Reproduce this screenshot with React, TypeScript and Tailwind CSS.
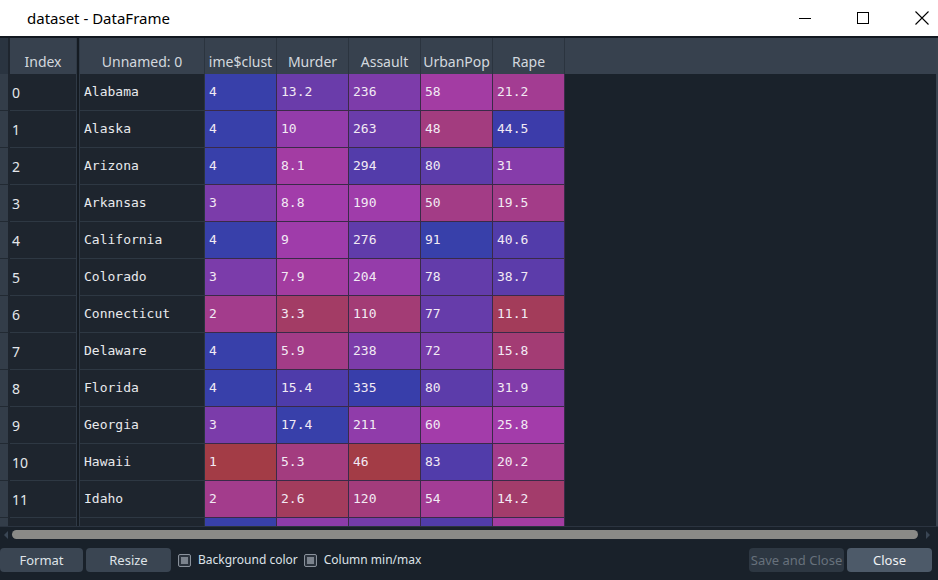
import React from 'react';

type Row = { idx: number; name: string; vals: number[] };

const rows: Row[] = [
  { idx: 0, name: 'Alabama', vals: [4, 13.2, 236, 58, 21.2] },
  { idx: 1, name: 'Alaska', vals: [4, 10, 263, 48, 44.5] },
  { idx: 2, name: 'Arizona', vals: [4, 8.1, 294, 80, 31] },
  { idx: 3, name: 'Arkansas', vals: [3, 8.8, 190, 50, 19.5] },
  { idx: 4, name: 'California', vals: [4, 9, 276, 91, 40.6] },
  { idx: 5, name: 'Colorado', vals: [3, 7.9, 204, 78, 38.7] },
  { idx: 6, name: 'Connecticut', vals: [2, 3.3, 110, 77, 11.1] },
  { idx: 7, name: 'Delaware', vals: [4, 5.9, 238, 72, 15.8] },
  { idx: 8, name: 'Florida', vals: [4, 15.4, 335, 80, 31.9] },
  { idx: 9, name: 'Georgia', vals: [3, 17.4, 211, 60, 25.8] },
  { idx: 10, name: 'Hawaii', vals: [1, 5.3, 46, 83, 20.2] },
  { idx: 11, name: 'Idaho', vals: [2, 2.6, 120, 54, 14.2] },
];

// next row only peeks in under the viewport edge, its text is never visible
const peek = [4, 10.4, 249, 83, 24];

const columns = ['ime$clust', 'Murder', 'Assault', 'UrbanPop', 'Rape'];
// min / max over the whole frame
const ranges: [number, number][] = [
  [1, 4],
  [0.8, 17.4],
  [45, 337],
  [32, 91],
  [7.3, 46],
];

const BG = [26, 34, 43];

function cellColor(v: number, col: number) {
  const [min, max] = ranges[col];
  const hue = (0.66 + (0.33 * (max - v)) / (max - min)) * 360;
  const c = 0.7;
  const h = hue / 60;
  const x = c * (1 - Math.abs((h % 2) - 1));
  let r = 0, g = 0, b = 0;
  if (h < 1) [r, g, b] = [c, x, 0];
  else if (h < 2) [r, g, b] = [x, c, 0];
  else if (h < 3) [r, g, b] = [0, c, x];
  else if (h < 4) [r, g, b] = [0, x, c];
  else if (h < 5) [r, g, b] = [x, 0, c];
  else [r, g, b] = [c, 0, x];
  const m = 1 - c;
  const a = 0.6;
  const mix = (ch: number, i: number) => Math.round(a * (ch + m) * 255 + (1 - a) * BG[i]);
  return `rgb(${mix(r, 0)}, ${mix(g, 1)}, ${mix(b, 2)})`;
}

function Checkbox({ label }: { label: string }) {
  return (
    <label className="flex items-center gap-[7px] text-[12px] leading-[16px] text-[#dde2e8] whitespace-nowrap">
      <span className="w-[13px] h-[13px] border border-[#8a929c] rounded-[2px] bg-[#2b333d] flex items-center justify-center shrink-0">
        <span className="w-[7px] h-[7px] bg-[#7b838d]" />
      </span>
      {label}
    </label>
  );
}

const mono = { fontFamily: '"DejaVu Sans Mono", monospace' };

export default function App() {
  return (
    <div
      className="w-[938px] h-[580px] flex flex-col bg-[#19212a] overflow-hidden"
      style={{ fontFamily: '"Noto Sans", "Open Sans", sans-serif' }}
    >
      {/* title bar */}
      <div className="h-[36px] bg-white flex items-center shrink-0">
        <span className="pl-[27px] text-[15px] text-black flex-1">dataset - DataFrame</span>
        <div className="flex items-center gap-[46px] pr-[9px]">
          <div className="w-[12px] h-px bg-black" />
          <div className="w-[12px] h-[12px] border border-black" />
          <svg width="14" height="14" viewBox="0 0 14 14">
            <path d="M0.5 0.5 L13.5 13.5 M13.5 0.5 L0.5 13.5" stroke="black" strokeWidth="1.1" />
          </svg>
        </div>
      </div>

      <div className="flex-1 flex flex-col border-t-2 border-[#121820]">
        {/* table */}
        <div className="h-[488px] shrink-0 flex overflow-hidden border-r-2 border-[#39434f]">
          {/* vertical header gutter */}
          <div className="w-[10px] flex flex-col shrink-0">
            <div className="h-[36px] shrink-0 bg-[#2a3440] border-r-2 border-[#1e252e]" />
            {[...rows, null].map((r, i) => (
              <div key={i} className="h-[37px] shrink-0 bg-[#333d49] border-b border-[#222a33] border-r-2 border-r-[#1e252e]" />
            ))}
          </div>

          {/* index column */}
          <div className="w-[66px] flex flex-col shrink-0">
            <div className="h-[36px] bg-[#37414e] text-[14px] text-[#d3d8de] flex items-end justify-center pb-[2px] shrink-0">
              Index
            </div>
            {rows.map((r) => (
              <div
                key={r.idx}
                className="h-[37px] shrink-0 bg-[#1e252e] border-b border-[#2e3843] flex items-center pl-[2px] text-[14px] text-[#e4e7eb]"
              >
                {r.idx}
              </div>
            ))}
            <div className="h-[37px] shrink-0 bg-[#1e252e]" />
          </div>

          {/* splitter */}
          <div className="w-[4px] shrink-0 bg-[#151b22] border-x border-[#2f3945]" />

          {/* name column */}
          <div className="w-[125px] flex flex-col shrink-0">
            <div className="h-[36px] bg-[#37414e] text-[14px] text-[#d3d8de] flex items-end justify-center pb-[2px] shrink-0 border-r border-[#2b343f]">
              Unnamed: 0
            </div>
            {rows.map((r) => (
              <div
                key={r.idx}
                className="h-[37px] shrink-0 bg-[#1e252e] border-b border-[#2e3843] border-r border-r-[#2b343f] flex items-center pl-[4px] text-[13px] text-[#e8eaed]"
                style={mono}
              >
                {r.name}
              </div>
            ))}
            <div className="h-[37px] shrink-0 bg-[#1e252e] border-r border-[#2b343f]" />
          </div>

          {/* data columns */}
          {columns.map((c, ci) => (
            <div key={c} className="w-[72px] flex flex-col shrink-0">
              <div className="h-[36px] bg-[#37414e] text-[14px] text-[#d3d8de] flex items-end justify-center pb-[2px] shrink-0 border-r border-[#2b343f] overflow-hidden whitespace-nowrap">
                {c}
              </div>
              {rows.map((r) => (
                <div
                  key={r.idx}
                  className="h-[37px] shrink-0 border-b border-r border-[#3a2a48] flex items-center pl-[4px] text-[13px] text-[#f2eaf4]"
                  style={{ ...mono, backgroundColor: cellColor(r.vals[ci], ci) }}
                >
                  {r.vals[ci]}
                </div>
              ))}
              <div
                className="h-[37px] shrink-0 border-r border-[#3a2a48]"
                style={{ backgroundColor: cellColor(peek[ci], ci) }}
              />
            </div>
          ))}

          {/* empty area */}
          <div className="flex-1 flex flex-col">
            <div className="h-[36px] bg-[#37414e] shrink-0" />
            <div className="flex-1 bg-[#1a222b]" />
          </div>
        </div>

        {/* horizontal scrollbar */}
        <div className="h-[16px] shrink-0 flex items-center border-t border-[#2b3440] bg-[#19212a]">
          <div className="w-[12px] flex justify-center">
            <div className="w-0 h-0 border-y-[4px] border-y-transparent border-r-[4px] border-r-[#3a4654]" />
          </div>
          <div className="flex-1 h-[9px] rounded-full bg-[#8a8a87]" />
          <div className="w-[20px] flex justify-center">
            <div className="w-0 h-0 border-y-[4px] border-y-transparent border-l-[4px] border-l-[#3a4654]" />
          </div>
        </div>

        {/* bottom bar */}
        <div className="flex-1 flex items-center gap-[3px] pb-[2px] text-[13px] leading-[18px]">
          <button className="w-[83px] h-[24px] shrink-0 rounded-[4px] bg-[#3a4552] text-[#dfe3e8]">Format</button>
          <button className="w-[85px] h-[24px] shrink-0 rounded-[4px] bg-[#3a4552] text-[#dfe3e8]">Resize</button>
          <div className="ml-[4px] flex items-center gap-[6px]">
            <Checkbox label="Background color" />
            <Checkbox label="Column min/max" />
          </div>
          <div className="flex-1" />
          <button className="w-[95px] h-[24px] shrink-0 rounded-[4px] bg-[#2d3742] text-[#67717c] whitespace-nowrap">
            Save and Close
          </button>
          <button className="w-[85px] h-[24px] shrink-0 rounded-[4px] bg-[#4d5a69] text-[#f0f2f4] mr-[6px]">Close</button>
        </div>
      </div>
    </div>
  );
}
